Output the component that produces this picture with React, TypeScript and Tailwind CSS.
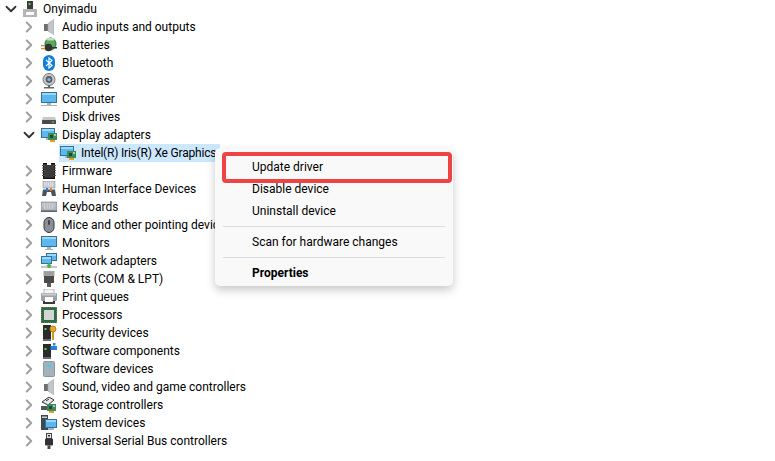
import { ChevronRight, ChevronDown } from 'lucide-react'

type IconName =
  | 'pc' | 'speaker' | 'battery' | 'bluetooth' | 'camera' | 'computer' | 'disk' | 'display'
  | 'chip' | 'hid' | 'keyboard' | 'mouse' | 'monitor' | 'network' | 'port' | 'printer'
  | 'cpu' | 'security' | 'component' | 'softdev' | 'storage' | 'system' | 'usb'

function Screen({ x = 0, y = 0, w = 16, h = 11 }: { x?: number; y?: number; w?: number; h?: number }) {
  return (
    <g>
      <rect x={x + 0.5} y={y + 0.5} width={w - 1} height={h - 1} fill="#5cb8ee" stroke="#3a6f96" />
      <rect x={x + 1} y={y + 1} width={w - 2} height={2} fill="#9ad8f8" />
    </g>
  )
}

function Card({ x = 7, y = 7 }: { x?: number; y?: number }) {
  return (
    <g>
      <rect x={x} y={y} width={9} height={7} fill="#3f8a5a" />
      <rect x={x + 2} y={y + 2} width={3} height={3} fill="#1f4a32" />
      <rect x={x + 6} y={y + 1} width={2} height={2} fill="#9fd0a8" />
      <rect x={x + 2} y={y + 7} width={5} height={2} fill="#e8a020" />
    </g>
  )
}

function Icon({ name }: { name: IconName }) {
  const body = () => {
    switch (name) {
      case 'pc':
        return (
          <g>
            <rect x="4" y="0" width="6" height="9" fill="#3c3c3c" />
            <rect x="5.5" y="2" width="2" height="2" fill="#4fd05a" />
            <rect x="0" y="8" width="14" height="8" fill="#b4b4b4" />
            <rect x="3" y="11" width="8" height="3" fill="#fff" />
          </g>
        )
      case 'speaker':
        return (
          <g>
            <rect x="3" y="5" width="4" height="7" fill="#6e6e6e" />
            <path d="M7 4.5 L12.5 0.5 L12.5 15.5 L7 12 Z" fill="#c2c6c9" stroke="#a0a4a8" strokeWidth="0.6" />
          </g>
        )
      case 'battery':
        return (
          <g>
            <ellipse cx="9.5" cy="7" rx="5.5" ry="6" fill="#52ad55" stroke="#2d6e35" />
            <rect x="6" y="1" width="7" height="2.5" fill="#c6d8c6" />
            <circle cx="7.5" cy="10.5" r="3.8" fill="#333" />
            <rect x="0" y="8" width="4" height="1.3" fill="#c49a2a" />
            <rect x="0" y="11" width="4" height="1.3" fill="#c49a2a" />
            <rect x="11" y="10" width="5" height="1.5" fill="#333" />
          </g>
        )
      case 'bluetooth':
        return (
          <g>
            <rect x="2" y="0" width="12" height="16" rx="6" fill="#0a7fe0" />
            <path d="M5 5 L11 10.5 L8 13 L8 3 L11 5.5 L5 11" fill="none" stroke="#fff" strokeWidth="1.2" />
          </g>
        )
      case 'camera':
        return (
          <g>
            <circle cx="8" cy="6.5" r="6" fill="#c9c9c9" stroke="#777" />
            <circle cx="8" cy="6.5" r="3.4" fill="#55606a" />
            <circle cx="8" cy="6.5" r="1.6" fill="#8fb6d6" />
            <rect x="7" y="12" width="2" height="2" fill="#666" />
            <rect x="3" y="14" width="10" height="1.5" fill="#666" />
          </g>
        )
      case 'computer':
      case 'monitor':
        return (
          <g>
            <Screen x={0} y={1} w={16} h={11} />
            <rect x="6" y="12" width="4" height="2" fill="#a8b4bc" />
            <rect x={name === 'computer' ? 0 : 4} y="14" width={name === 'computer' ? 16 : 8} height="1" fill="#a8b4bc" />
          </g>
        )
      case 'disk':
        return (
          <g>
            <path d="M2 8 L14 8 L15 11 L1 11 Z" fill="#c8c8c8" />
            <rect x="1" y="11" width="14" height="4" rx="0.5" fill="#4a4a4a" />
            <rect x="11" y="12.5" width="2" height="1.2" fill="#4fd05a" />
          </g>
        )
      case 'display':
        return (
          <g>
            <Screen x={0} y={1} w={14} h={10} />
            <rect x="5" y="11" width="4" height="2" fill="#a8b4bc" />
            <Card x={7} y={6} />
          </g>
        )
      case 'chip':
        return (
          <g>
            <rect x="2.5" y="0.5" width="11" height="15" fill="#2f2f2f" stroke="#111" />
            <rect x="6" y="0" width="4" height="2" fill="#fff" />
            <path d="M1 2.5h14M1 5h14M1 7.5h14M1 10h14M1 12.5h14" stroke="#555" strokeWidth="1" />
            <rect x="4" y="2" width="8" height="12" fill="#3a3a3a" />
          </g>
        )
      case 'hid':
        return (
          <g>
            <rect x="2" y="0" width="12" height="7" fill="#c6ccd2" stroke="#8c949c" strokeWidth="0.6" />
            <path d="M3 2h10M3 4h10" stroke="#f0f2f4" strokeDasharray="1 1" />
            <path d="M1 15 L2 8.5 L14 8.5 L15 15 L11 15 L10 11 L6 11 L5 15 Z" fill="#4a525a" />
            <rect x="5" y="7" width="2" height="3" fill="#2f80d0" />
            <rect x="9" y="7" width="2" height="3" fill="#e08030" />
          </g>
        )
      case 'keyboard':
        return (
          <g>
            <rect x="0" y="3" width="16" height="9" fill="#aeb4ba" stroke="#7f868c" strokeWidth="0.6" />
            <path d="M1.5 5h13M1.5 7h13M3 9h10" stroke="#eceef0" strokeDasharray="1 0.6" />
            <rect x="0" y="11.5" width="16" height="1.5" fill="#5e646a" />
          </g>
        )
      case 'mouse':
        return (
          <g>
            <rect x="3" y="0.5" width="10" height="15" rx="5" fill="#8a9096" stroke="#333" />
            <rect x="7" y="3" width="2" height="5" rx="1" fill="#3c4248" />
          </g>
        )
      case 'network':
        return (
          <g>
            <Screen x={5} y={0} w={11} h={8} />
            <Screen x={0} y={3} w={11} h={8} />
            <rect x="0" y="13" width="16" height="2" fill="#c4c8cc" />
            <path d="M5 13 L8 10 L11 13 L9.5 13 L9.5 15 L6.5 15 L6.5 13 Z" fill="#52b04e" />
          </g>
        )
      case 'port':
        return (
          <g>
            <rect x="3" y="0" width="10" height="5" fill="#c4c4c4" stroke="#666" strokeWidth="0.6" />
            <path d="M5 1v3M7 1v3M9 1v3M11 1v3" stroke="#555" strokeWidth="0.7" />
            <rect x="3" y="5" width="10" height="7" fill="#4a4a4a" />
            <rect x="6" y="12" width="4" height="4" fill="#5c5c5c" />
          </g>
        )
      case 'printer':
        return (
          <g>
            <rect x="3" y="0" width="10" height="5" fill="#f4f4f4" stroke="#8a8a8a" strokeWidth="0.6" />
            <rect x="0" y="4" width="16" height="8" rx="1" fill="#9ca2a8" />
            <rect x="1" y="4.5" width="14" height="2" fill="#c8ccd0" />
            <rect x="2" y="12" width="12" height="3" fill="#3a3a3a" />
            <rect x="4" y="8" width="8" height="5" fill="#fff" />
          </g>
        )
      case 'cpu':
        return (
          <g>
            <rect x="0" y="0" width="16" height="16" fill="#2d6a4a" stroke="#b89a30" strokeDasharray="1 1" />
            <rect x="1" y="1" width="14" height="14" fill="#2d6a4a" />
            <rect x="3" y="3" width="10" height="10" fill="#d4d6d4" />
          </g>
        )
      case 'security':
        return (
          <g>
            <rect x="2" y="0" width="8" height="14" fill="#2b2b2b" />
            <rect x="3.5" y="3" width="2" height="2" fill="#4fd05a" />
            <rect x="2" y="14" width="8" height="2" fill="#6a6a6a" />
            <circle cx="12" cy="4" r="3" fill="#e0a830" stroke="#b88018" />
            <rect x="11" y="6" width="2" height="9" fill="#d09820" />
          </g>
        )
      case 'component':
        return (
          <g>
            <rect x="2" y="1" width="8" height="13" fill="#2b2b2b" />
            <rect x="3.5" y="5" width="2" height="2" fill="#4fd05a" />
            <rect x="2" y="14" width="8" height="2" fill="#6a6a6a" />
            <rect x="12" y="0" width="2.5" height="2.5" fill="#2f80d8" />
            <rect x="9.5" y="3" width="6.5" height="4" fill="#2f80d8" />
          </g>
        )
      case 'softdev':
        return (
          <g>
            <rect x="2.5" y="0.5" width="11" height="15" rx="1" fill="#a4b0ba" stroke="#8a96a0" />
            <rect x="6" y="3" width="4" height="3" fill="#52c8e8" />
          </g>
        )
      case 'storage':
        return (
          <g>
            <path d="M1 5 L8 0 L13 3 L7 8 Z" fill="#e8e8e8" stroke="#333" />
            <path d="M5 4 L8 2" stroke="#333" />
            <rect x="0" y="9" width="8" height="4" fill="#555" />
            <Card x={6} y={7} />
          </g>
        )
      case 'system':
        return (
          <g>
            <rect x="0" y="0" width="7" height="15" fill="#3a4a54" />
            <rect x="1" y="1.5" width="5" height="1.5" fill="#d0d0d0" />
            <Screen x={4} y={4} w={12} h={9} />
            <rect x="7" y="13" width="6" height="2" fill="#a8b4bc" />
          </g>
        )
      case 'usb':
        return (
          <g>
            <rect x="5.5" y="0.5" width="5" height="5" fill="#e4e4e4" stroke="#444" />
            <rect x="7" y="2" width="2" height="1.5" fill="#333" />
            <rect x="4" y="5.5" width="8" height="7" rx="1" fill="#333" />
            <rect x="6.5" y="12.5" width="3" height="3.5" fill="#4a4a4a" />
          </g>
        )
    }
  }
  return (
    <svg width="16" height="16" viewBox="0 0 16 16" className="shrink-0">
      {body()}
    </svg>
  )
}

interface Row {
  label: string
  icon: IconName
  open?: boolean
}

const before: Row[] = [
  { label: 'Audio inputs and outputs', icon: 'speaker' },
  { label: 'Batteries', icon: 'battery' },
  { label: 'Bluetooth', icon: 'bluetooth' },
  { label: 'Cameras', icon: 'camera' },
  { label: 'Computer', icon: 'computer' },
  { label: 'Disk drives', icon: 'disk' },
  { label: 'Display adapters', icon: 'display', open: true },
]

const after: Row[] = [
  { label: 'Firmware', icon: 'chip' },
  { label: 'Human Interface Devices', icon: 'hid' },
  { label: 'Keyboards', icon: 'keyboard' },
  { label: 'Mice and other pointing devices', icon: 'mouse' },
  { label: 'Monitors', icon: 'monitor' },
  { label: 'Network adapters', icon: 'network' },
  { label: 'Ports (COM & LPT)', icon: 'port' },
  { label: 'Print queues', icon: 'printer' },
  { label: 'Processors', icon: 'cpu' },
  { label: 'Security devices', icon: 'security' },
  { label: 'Software components', icon: 'component' },
  { label: 'Software devices', icon: 'softdev' },
  { label: 'Sound, video and game controllers', icon: 'speaker' },
  { label: 'Storage controllers', icon: 'storage' },
  { label: 'System devices', icon: 'system' },
  { label: 'Universal Serial Bus controllers', icon: 'usb' },
]

function TreeRow({ row }: { row: Row }) {
  return (
    <div className="flex h-[18px] items-center pl-[19px]">
      <div className="mr-[2px] flex w-[20px] justify-center">
        {row.open ? (
          <ChevronDown size={18} strokeWidth={2.4} className="text-[#333333]" />
        ) : (
          <ChevronRight size={18} strokeWidth={2.6} className="text-[#a0a0a0]" />
        )}
      </div>
      <Icon name={row.icon} />
      <span className="ml-[5px] whitespace-nowrap">{row.label}</span>
    </div>
  )
}

export default function App() {
  return (
    <div className="relative h-[461px] w-[775px] overflow-hidden bg-white font-['Roboto','Open_Sans',sans-serif] text-[12px] leading-[18px] text-black">
      <div className="flex flex-col">
        <div className="flex h-[18px] items-center pl-[1px]">
          <div className="mr-[2px] flex w-[20px] justify-center">
            <ChevronDown size={18} strokeWidth={2.4} className="text-[#333333]" />
          </div>
          <Icon name="pc" />
          <span className="ml-[4px]">Onyimadu</span>
        </div>

        {before.map((r) => (
          <TreeRow key={r.label} row={r} />
        ))}

        <div className="ml-[59px] flex h-[18px] w-[161px] items-center bg-[#cce8ff] pl-[1px]">
          <Icon name="display" />
          <span className="ml-[5px] whitespace-nowrap tracking-[-0.2px]">Intel(R) Iris(R) Xe Graphics</span>
        </div>

        {after.map((r) => (
          <TreeRow key={r.label} row={r} />
        ))}
      </div>

      {/* Context menu */}
      <div className="absolute left-[215px] top-[148px] flex h-[138px] w-[238px] flex-col rounded-[5px] bg-[#f9f9f9] pl-[8px] pt-[8px] shadow-[0_4px_10px_rgba(0,0,0,0.22)]">
        <div className="flex h-[22px] items-center pl-[29px]">Update driver</div>
        <div className="flex h-[22px] items-center pl-[29px]">Disable device</div>
        <div className="flex h-[22px] items-center pl-[29px]">Uninstall device</div>
        <div className="mt-[4px] h-px w-[222px] bg-[#dcdcdc]" />
        <div className="mt-[4px] flex h-[22px] items-center pl-[29px]">Scan for hardware changes</div>
        <div className="mt-[4px] h-px w-[222px] bg-[#dcdcdc]" />
        <div className="mt-[4px] flex h-[22px] items-center pl-[29px] font-bold">Properties</div>
        {/* red annotation box */}
        <div className="absolute left-[7px] top-[4px] h-[31px] w-[230px] rounded-[4px] border-[4px] border-[#ee4444]" />
      </div>
    </div>
  )
}
